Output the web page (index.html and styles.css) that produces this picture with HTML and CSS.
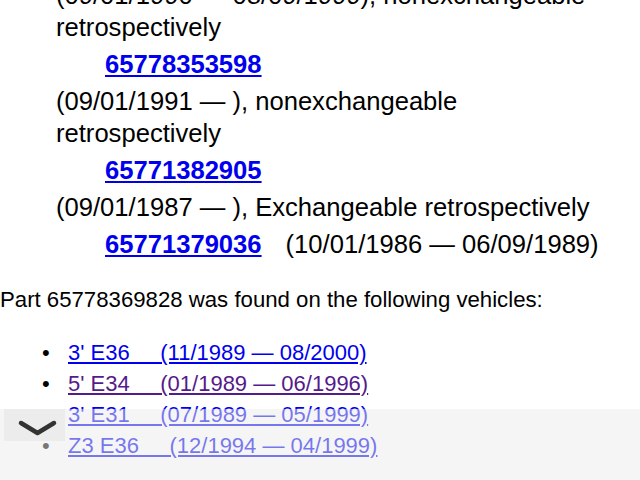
FILE: index.html
```html
<!DOCTYPE html>
<html>
<head>
<meta charset="utf-8">
<link rel="stylesheet" href="styles.css">
</head>
<body>
<div class="parts">
  <div class="desc first">(09/01/1990 — 08/09/1999), nonexchangeable retrospectively</div>
  <div class="num"><a href="#a">65778353598</a></div>
  <div class="desc">(09/01/1991 — ), nonexchangeable retrospectively</div>
  <div class="num"><a href="#b">65771382905</a></div>
  <div class="desc">(09/01/1987 — ), Exchangeable retrospectively</div>
  <div class="num"><a href="#c">65771379036</a><span class="dates">(10/01/1986 — 06/09/1989)</span></div>
</div>
<p class="found">Part 65778369828 was found on the following vehicles:</p>
<ul class="vehicles">
  <li><a href="#e36">3' E36&nbsp;&nbsp;&nbsp;&nbsp;&nbsp;(11/1989 — 08/2000)</a></li>
  <li><a class="visited" href="#e34">5' E34&nbsp;&nbsp;&nbsp;&nbsp;&nbsp;(01/1989 — 06/1996)</a></li>
  <li><a href="#e31">3' E31&nbsp;&nbsp;&nbsp;&nbsp;&nbsp;(07/1989 — 05/1999)</a></li>
  <li><a href="#z3">Z3 E36&nbsp;&nbsp;&nbsp;&nbsp;&nbsp;(12/1994 — 04/1999)</a></li>
</ul>
<div class="bar">
  <div class="toggle">
    <svg width="61" height="32" viewBox="0 0 61 32"><path d="M17 14 L33.5 24 L50 14" fill="none" stroke="#333" stroke-width="4.5" stroke-linecap="round" stroke-linejoin="round"/></svg>
  </div>
</div>
</body>
</html>
```
FILE: styles.css
```css
body {
  margin: 0;
  font-family: "Liberation Sans", Arial, sans-serif;
  color: #000;
  background: #fff;
}
a {
  color: #0000ee;
}
a.visited {
  color: #551a8b;
}
.parts {
  padding: 0 28px 0 56px;
  font-size: 25.6px;
  line-height: 32px;
}
.desc {
  margin-top: 5px;
}
.desc.first {
  margin-top: -21px;
}
.num {
  margin-top: 5px;
  padding-left: 49px;
  font-weight: bold;
}
.dates {
  font-weight: normal;
  margin-left: 24px;
}
.found {
  margin: 24px 0 0;
  font-size: 22.2px;
  line-height: 31px;
}
.vehicles {
  margin: 22px 0 0;
  padding-left: 68px;
  font-size: 22px;
  line-height: 31px;
}
.vehicles li::marker {
  content: "\2022\00a0\00a0\00a0";
}
.bar {
  position: fixed;
  left: 0;
  right: 0;
  bottom: 0;
  height: 71px;
  background: rgba(235, 235, 235, 0.5);
}
.toggle {
  position: absolute;
  left: 4px;
  top: 0;
  width: 61px;
  height: 32px;
  background: #ececec;
}
.toggle svg {
  display: block;
}
```
